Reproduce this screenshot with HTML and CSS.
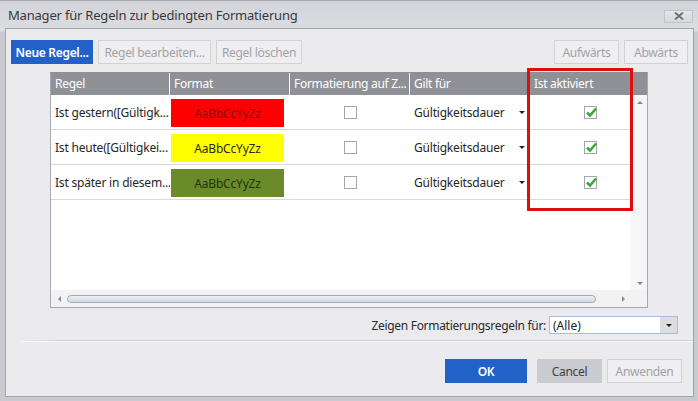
FILE: index.html
```html
<!DOCTYPE html>
<html lang="de">
<head>
    <meta charset="UTF-8">
    <title>Manager für Regeln zur bedingten Formatierung</title>
    <link rel="stylesheet" href="styles.css">
</head>
<body>
    <div class="window">
        <div class="titlebar">
            <span class="title">Manager für Regeln zur bedingten Formatierung</span>
            <div class="close">
                <svg width="10" height="8" viewBox="0 0 10 8"><path d="M1 0.5 L9 7.5 M9 0.5 L1 7.5" stroke="#6a6b70" stroke-width="1.8"/></svg>
            </div>
        </div>

        <div class="client">
            <div class="toolbar">
                <button class="btn primary new">Neue Regel...</button>
                <button class="btn edit" disabled>Regel bearbeiten...</button>
                <button class="btn del" disabled>Regel löschen</button>
                <span class="spacer"></span>
                <button class="btn up" disabled>Aufwärts</button>
                <button class="btn down" disabled>Abwärts</button>
            </div>

            <div class="grid">
                <div class="head">
                    <div class="hcell c1">Regel</div>
                    <div class="hcell c2">Format</div>
                    <div class="hcell c3">Formatierung auf Z...</div>
                    <div class="hcell c4">Gilt für</div>
                    <div class="hcell c5">Ist aktiviert</div>
                </div>
                <div class="rows">
                    <div class="row">
                        <div class="cell c1">Ist gestern([Gültigk...</div>
                        <div class="cell c2"><div class="swatch red">AaBbCcYyZz</div></div>
                        <div class="cell c3 center"><span class="check"></span></div>
                        <div class="cell c4 combo-cell">Gültigkeitsdauer<span class="tri"></span></div>
                        <div class="cell c5 center"><span class="check on"><svg width="13" height="11" viewBox="0 0 13 11"><path d="M2 5.5 L5 8.5 L11 1.5" fill="none" stroke="#3da83d" stroke-width="2.6"/></svg></span></div>
                    </div>
                    <div class="row">
                        <div class="cell c1">Ist heute([Gültigkei...</div>
                        <div class="cell c2"><div class="swatch yellow">AaBbCcYyZz</div></div>
                        <div class="cell c3 center"><span class="check"></span></div>
                        <div class="cell c4 combo-cell">Gültigkeitsdauer<span class="tri"></span></div>
                        <div class="cell c5 center"><span class="check on"><svg width="13" height="11" viewBox="0 0 13 11"><path d="M2 5.5 L5 8.5 L11 1.5" fill="none" stroke="#3da83d" stroke-width="2.6"/></svg></span></div>
                    </div>
                    <div class="row">
                        <div class="cell c1">Ist später in diesem...</div>
                        <div class="cell c2"><div class="swatch green">AaBbCcYyZz</div></div>
                        <div class="cell c3 center"><span class="check"></span></div>
                        <div class="cell c4 combo-cell">Gültigkeitsdauer<span class="tri"></span></div>
                        <div class="cell c5 center"><span class="check on"><svg width="13" height="11" viewBox="0 0 13 11"><path d="M2 5.5 L5 8.5 L11 1.5" fill="none" stroke="#3da83d" stroke-width="2.6"/></svg></span></div>
                    </div>
                </div>
                <div class="vscroll">
                    <span class="arrow up"></span>
                    <span class="arrow down"></span>
                </div>
                <div class="hscroll">
                    <span class="arrow left"></span>
                    <span class="thumb"></span>
                    <span class="arrow right"></span>
                </div>
                <div class="corner"></div>
                <div class="highlight"></div>
            </div>

            <div class="filter">
                <span class="label">Zeigen Formatierungsregeln für:</span>
                <div class="select">
                    <span class="value">(Alle)</span>
                    <span class="drop"><span class="tri"></span></span>
                </div>
            </div>

            <div class="sep"></div>

            <div class="footer">
                <button class="btn primary ok">OK</button>
                <button class="btn cancel">Cancel</button>
                <button class="btn apply" disabled>Anwenden</button>
            </div>
        </div>
    </div>
</body>
</html>
```

FILE: styles.css
```css
body {
    margin: 0;
    font-family: 'Noto Sans', 'Open Sans', Arial, sans-serif;
    font-size: 12px;
    color: #262626;
    background: #c9cacf;
}
.window {
    width: 698px;
    height: 401px;
    box-sizing: border-box;
    border-top: 1px solid #a9aaaf;
    background: linear-gradient(#d3d4d9, #dcdde1 30px, #c9cacf 31px);
    padding: 0 4px 4px 5px;
    display: flex;
    flex-direction: column;
}
.titlebar {
    height: 27px;
    display: flex;
    align-items: center;
    justify-content: space-between;
    padding: 0 1px 0 3px;
}
.title {
    font-size: 13px;
    color: #38383c;
    letter-spacing: -0.2px;
}
.close {
    width: 27px;
    height: 11px;
    margin-top: 3px;
    border: 1px solid #c2c3c8;
    background: linear-gradient(#e6e7ea, #d6d7db);
    display: flex;
    align-items: center;
    justify-content: center;
}
.client {
    flex: 1;
    background: #ebebee;
    border: 1px solid #a3a4a9;
    padding: 11px 5px 0 5px;
    display: flex;
    flex-direction: column;
}
.toolbar {
    display: flex;
    gap: 5px;
    height: 24px;
}
.spacer {
    flex: 1;
}
.btn {
    font-family: inherit;
    font-size: 12px;
    height: 24px;
    padding: 0;
    border: 1px solid #d2d2d6;
    background: #efeff1;
    color: #a2a2a6;
    letter-spacing: -0.3px;
    white-space: nowrap;
}
.btn.primary {
    background: #2261c8;
    border-color: #2261c8;
    color: #fff;
    font-weight: 600;
}
.toolbar .new { width: 82px; }
.toolbar .edit { width: 113px; }
.toolbar .del { width: 86px; }
.toolbar .up { width: 65px; }
.toolbar .down { width: 64px; }
.grid {
    position: relative;
    margin: 8px 0 0 39px;
    width: 598px;
    height: 236px;
    box-sizing: border-box;
    border: 1px solid #a8a9ae;
    border-top-color: #8e9096;
    background: #fff;
    display: grid;
    grid-template-columns: 580px 1fr;
    grid-template-rows: 22px 1fr 17px;
}
.head {
    grid-column: 1 / -1;
    background: #8f9197;
    display: flex;
}
.hcell {
    color: #fff;
    padding-left: 4px;
    line-height: 22px;
    box-sizing: border-box;
    border-right: 1px solid #fff;
    white-space: nowrap;
    overflow: hidden;
    letter-spacing: -0.3px;
}
.hcell.c5 {
    border-right: none;
}
.c1 { width: 119px; }
.c2 { width: 120px; }
.c3 { width: 120px; }
.c4 { width: 120px; }
.c5 { width: 101px; }
.rows {
    background: #fff;
}
.row {
    display: flex;
    height: 35px;
    box-sizing: border-box;
    border-bottom: 1px solid #d9d9dc;
}
.cell {
    box-sizing: border-box;
    padding-left: 4px;
    display: flex;
    align-items: center;
    white-space: nowrap;
    overflow: hidden;
    letter-spacing: -0.2px;
}
.cell.c2 {
    padding: 4px 6px 2px 1px;
    align-items: stretch;
}
.cell.center {
    justify-content: center;
    padding-left: 0;
}
.cell.c5 {
    padding-left: 20px;
}
.swatch {
    flex: 1;
    display: flex;
    align-items: center;
    justify-content: center;
    letter-spacing: -0.2px;
}
.swatch.red {
    background: #ff0000;
    color: #8c0a0a;
}
.swatch.yellow {
    background: #ffff00;
    color: #2c2c00;
}
.swatch.green {
    background: #6b8b2a;
    color: #22340c;
}
.check {
    width: 13px;
    height: 13px;
    box-sizing: border-box;
    border: 1px solid #a6a6aa;
    background: #fff;
    position: relative;
}
.check svg {
    position: absolute;
    left: 0;
    top: 0;
}
.combo-cell {
    justify-content: space-between;
    padding-right: 5px;
}
.tri {
    width: 0;
    height: 0;
    border-left: 3px solid transparent;
    border-right: 3px solid transparent;
    border-top: 3px solid #222;
}
.vscroll {
    background: #f6f6f7;
    position: relative;
}
.hscroll {
    background: #f2f2f3;
    position: relative;
    display: flex;
    align-items: center;
    padding: 0 6px 0 7px;
    gap: 6px;
}
.corner {
    background: #f2f2f3;
}
.arrow {
    width: 0;
    height: 0;
    display: block;
}
.arrow.up {
    position: absolute;
    left: 6px;
    top: 6px;
    border-left: 3px solid transparent;
    border-right: 3px solid transparent;
    border-bottom: 3px solid #8a8a8e;
}
.arrow.down {
    position: absolute;
    left: 6px;
    bottom: 5px;
    border-left: 3px solid transparent;
    border-right: 3px solid transparent;
    border-top: 3px solid #8a8a8e;
}
.arrow.left {
    border-top: 3px solid transparent;
    border-bottom: 3px solid transparent;
    border-right: 3px solid #8a8a8e;
}
.arrow.right {
    border-top: 3px solid transparent;
    border-bottom: 3px solid transparent;
    border-left: 3px solid #8a8a8e;
    margin-left: 20px;
}
.thumb {
    width: 529px;
    height: 8px;
    box-sizing: border-box;
    border: 1px solid #a7abb6;
    border-radius: 4px;
    background: linear-gradient(#eef0f6, #d3d8e4);
}
.highlight {
    position: absolute;
    left: 476px;
    top: -5px;
    width: 106px;
    height: 143px;
    box-sizing: border-box;
    border: 3px solid #e00d0d;
}
.filter {
    display: flex;
    justify-content: flex-end;
    align-items: center;
    gap: 3px;
    margin: 8px 10px 0 0;
    height: 18px;
}
.label {
    color: #2a2a2a;
    letter-spacing: -0.3px;
}
.select {
    width: 129px;
    height: 18px;
    box-sizing: border-box;
    border: 1px solid #a9bedd;
    background: #fff;
    display: flex;
    align-items: center;
    justify-content: space-between;
}
.value {
    padding-left: 3px;
    color: #222;
}
.drop {
    width: 17px;
    height: 16px;
    background: #dcdde1;
    display: flex;
    align-items: center;
    justify-content: center;
}
.sep {
    margin: 6px -5px 0 10px;
    height: 1px;
    background: linear-gradient(90deg, #ebebee, #d2d2d6 40px);
    border-bottom: 1px solid #f6f6f8;
}
.footer {
    display: flex;
    justify-content: flex-end;
    margin: 17px 6px 0 0;
    gap: 5px;
}
.footer .ok {
    width: 82px;
    margin-right: 5px;
    font-weight: 600;
}
.footer .cancel {
    width: 65px;
    background: #c9cbd1;
    border-color: #c9cbd1;
    color: #3e3e42;
}
.footer .apply {
    width: 75px;
}
```
